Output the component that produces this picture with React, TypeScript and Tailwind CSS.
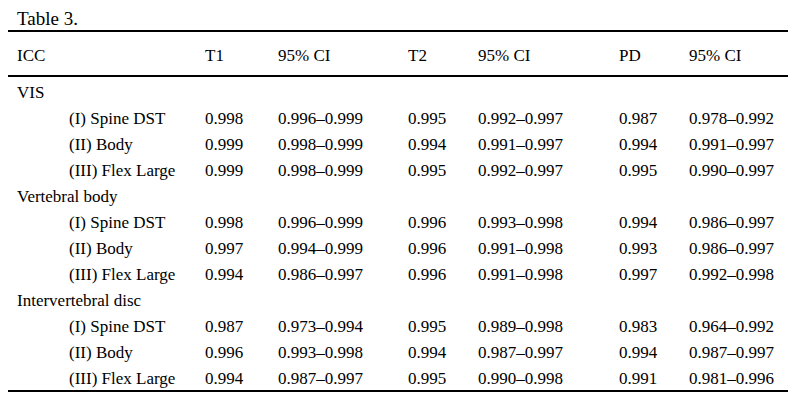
const groups = [
  {
    name: "VIS",
    rows: [
      ["(I) Spine DST", "0.998", "0.996–0.999", "0.995", "0.992–0.997", "0.987", "0.978–0.992"],
      ["(II) Body", "0.999", "0.998–0.999", "0.994", "0.991–0.997", "0.994", "0.991–0.997"],
      ["(III) Flex Large", "0.999", "0.998–0.999", "0.995", "0.992–0.997", "0.995", "0.990–0.997"],
    ],
  },
  {
    name: "Vertebral body",
    rows: [
      ["(I) Spine DST", "0.998", "0.996–0.999", "0.996", "0.993–0.998", "0.994", "0.986–0.997"],
      ["(II) Body", "0.997", "0.994–0.999", "0.996", "0.991–0.998", "0.993", "0.986–0.997"],
      ["(III) Flex Large", "0.994", "0.986–0.997", "0.996", "0.991–0.998", "0.997", "0.992–0.998"],
    ],
  },
  {
    name: "Intervertebral disc",
    rows: [
      ["(I) Spine DST", "0.987", "0.973–0.994", "0.995", "0.989–0.998", "0.983", "0.964–0.992"],
      ["(II) Body", "0.996", "0.993–0.998", "0.994", "0.987–0.997", "0.994", "0.987–0.997"],
      ["(III) Flex Large", "0.994", "0.987–0.997", "0.995", "0.990–0.998", "0.991", "0.981–0.996"],
    ],
  },
];

const cols = "grid grid-cols-[188px_73px_130px_70px_141px_70px_1fr] pl-[9px]";

export default function App() {
  return (
    <main className="w-[801px] h-[406px] bg-white text-black font-['Liberation_Serif','Times_New_Roman',serif] pl-[8px]">
      <div className="w-[780px]">
        <div className="h-[30px] pt-[8px] pl-[9px] text-[19px] leading-[22px]">Table 3.</div>

        <div className={`${cols} border-t-2 border-b-2 border-black pt-[11px] pb-[6px] text-[17px] leading-[26px]`}>
          <div>ICC</div>
          <div>T1</div>
          <div>95% CI</div>
          <div>T2</div>
          <div>95% CI</div>
          <div>PD</div>
          <div>95% CI</div>
        </div>

        <div className="pt-[3px] border-b-2 border-black text-[17px] leading-[26px]">
          {groups.map((g, gi) => (
            <div key={g.name}>
              <div className="h-[26px] pl-[9px]">{g.name}</div>
              {g.rows.map((r, ri) => {
                const last = gi === groups.length - 1 && ri === g.rows.length - 1;
                return (
                  <div key={r[0]} className={`${cols} ${last ? "h-[24px]" : "h-[26px]"}`}>
                    <div className="pl-[52px] whitespace-nowrap">{r[0]}</div>
                    {r.slice(1).map((v, i) => (
                      <div key={i} className="whitespace-nowrap">{v}</div>
                    ))}
                  </div>
                );
              })}
            </div>
          ))}
        </div>
      </div>
    </main>
  );
}
